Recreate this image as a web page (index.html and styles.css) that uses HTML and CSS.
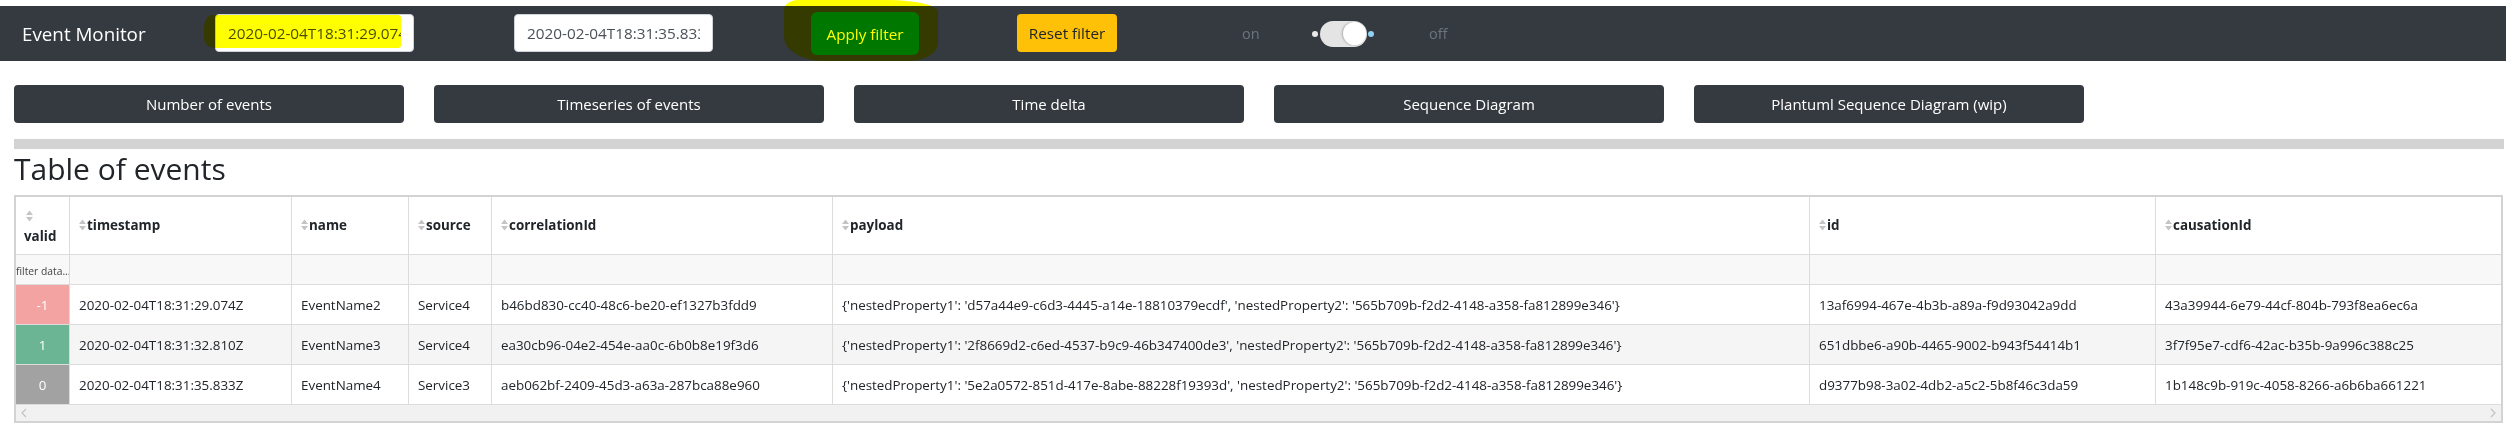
FILE: index.html
```html
<!DOCTYPE html>
<html lang="en">
<head>
<meta charset="utf-8">
<title>Event Monitor</title>
<link rel="stylesheet" href="styles.css">
</head>
<body>
<div class="page">
  <nav class="navbar">
    <span class="brand">Event Monitor</span>
    <input class="date-input first" type="text" value="2020-02-04T18:31:29.074">
    <input class="date-input second" type="text" value="2020-02-04T18:31:35.833">
    <button class="btn-apply" type="button">Apply filter</button>
    <button class="btn-reset" type="button">Reset filter</button>
    <div class="switch">
      <span class="switch-label">on</span>
      <span class="dot dot-left"></span>
      <span class="track"><span class="knob"></span></span>
      <span class="dot dot-right"></span>
      <span class="switch-label off">off</span>
    </div>
    <span class="highlight hl-input"></span>
    <span class="highlight hl-apply"></span>
  </nav>

  <div class="tabs">
    <button class="tab" type="button">Number of events</button>
    <button class="tab" type="button">Timeseries of events</button>
    <button class="tab" type="button">Time delta</button>
    <button class="tab" type="button">Sequence Diagram</button>
    <button class="tab" type="button">Plantuml Sequence Diagram (wip)</button>
  </div>

  <div class="divider"></div>

  <h2 class="title">Table of events</h2>

  <div class="table-frame">
    <table class="events">
      <colgroup>
        <col class="c-valid">
        <col class="c-ts">
        <col class="c-name">
        <col class="c-source">
        <col class="c-corr">
        <col class="c-payload">
        <col class="c-id">
        <col class="c-cause">
      </colgroup>
      <thead>
        <tr class="head-row">
          <th class="valid-head"><svg class="sort sort-block" viewBox="0 0 7 12" width="7" height="12"><path d="M0 5 L3.5 0.5 L7 5 Z M0 7 L3.5 11.5 L7 7 Z"/></svg><span>valid</span></th>
          <th><svg class="sort" viewBox="0 0 7 12" width="7" height="12"><path d="M0 5 L3.5 0.5 L7 5 Z M0 7 L3.5 11.5 L7 7 Z"/></svg>timestamp</th>
          <th><svg class="sort" viewBox="0 0 7 12" width="7" height="12"><path d="M0 5 L3.5 0.5 L7 5 Z M0 7 L3.5 11.5 L7 7 Z"/></svg>name</th>
          <th><svg class="sort" viewBox="0 0 7 12" width="7" height="12"><path d="M0 5 L3.5 0.5 L7 5 Z M0 7 L3.5 11.5 L7 7 Z"/></svg>source</th>
          <th><svg class="sort" viewBox="0 0 7 12" width="7" height="12"><path d="M0 5 L3.5 0.5 L7 5 Z M0 7 L3.5 11.5 L7 7 Z"/></svg>correlationId</th>
          <th><svg class="sort" viewBox="0 0 7 12" width="7" height="12"><path d="M0 5 L3.5 0.5 L7 5 Z M0 7 L3.5 11.5 L7 7 Z"/></svg>payload</th>
          <th><svg class="sort" viewBox="0 0 7 12" width="7" height="12"><path d="M0 5 L3.5 0.5 L7 5 Z M0 7 L3.5 11.5 L7 7 Z"/></svg>id</th>
          <th class="last"><svg class="sort" viewBox="0 0 7 12" width="7" height="12"><path d="M0 5 L3.5 0.5 L7 5 Z M0 7 L3.5 11.5 L7 7 Z"/></svg>causationId</th>
        </tr>
        <tr class="filter-row">
          <td class="filter-cell"><span class="placeholder">filter data...</span></td>
          <td></td><td></td><td></td><td></td><td></td><td></td><td class="last"></td>
        </tr>
      </thead>
      <tbody>
        <tr class="row">
          <td class="valid neg">-1</td>
          <td>2020-02-04T18:31:29.074Z</td>
          <td>EventName2</td>
          <td>Service4</td>
          <td>b46bd830-cc40-48c6-be20-ef1327b3fdd9</td>
          <td>{'nestedProperty1': 'd57a44e9-c6d3-4445-a14e-18810379ecdf', 'nestedProperty2': '565b709b-f2d2-4148-a358-fa812899e346'}</td>
          <td>13af6994-467e-4b3b-a89a-f9d93042a9dd</td>
          <td class="last">43a39944-6e79-44cf-804b-793f8ea6ec6a</td>
        </tr>
        <tr class="row striped">
          <td class="valid pos">1</td>
          <td>2020-02-04T18:31:32.810Z</td>
          <td>EventName3</td>
          <td>Service4</td>
          <td>ea30cb96-04e2-454e-aa0c-6b0b8e19f3d6</td>
          <td>{'nestedProperty1': '2f8669d2-c6ed-4537-b9c9-46b347400de3', 'nestedProperty2': '565b709b-f2d2-4148-a358-fa812899e346'}</td>
          <td>651dbbe6-a90b-4465-9002-b943f54414b1</td>
          <td class="last">3f7f95e7-cdf6-42ac-b35b-9a996c388c25</td>
        </tr>
        <tr class="row">
          <td class="valid zero">0</td>
          <td>2020-02-04T18:31:35.833Z</td>
          <td>EventName4</td>
          <td>Service3</td>
          <td>aeb062bf-2409-45d3-a63a-287bca88e960</td>
          <td>{'nestedProperty1': '5e2a0572-851d-417e-8abe-88228f19393d', 'nestedProperty2': '565b709b-f2d2-4148-a358-fa812899e346'}</td>
          <td>d9377b98-3a02-4db2-a5c2-5b8f46c3da59</td>
          <td class="last">1b148c9b-919c-4058-8266-a6b6ba661221</td>
        </tr>
      </tbody>
    </table>
    <div class="hscroll">
      <svg class="arrow" viewBox="0 0 6 10" width="6" height="10"><path d="M5 1 L1 5 L5 9" /></svg>
      <svg class="arrow" viewBox="0 0 6 10" width="6" height="10"><path d="M1 1 L5 5 L1 9" /></svg>
    </div>
  </div>
</div>
</body>
</html>
```

FILE: styles.css
```css
html, body {
  margin: 0;
  padding: 0;
  background: #ffffff;
}

body {
  font-family: "Open Sans", "Noto Sans", sans-serif;
  color: #212529;
}

.page {
  padding-top: 6px;
  width: 2506px;
}

/* ---------- navbar ---------- */
.navbar {
  position: relative;
  height: 55px;
  background: #343a40;
  display: flex;
  align-items: center;
}

.brand {
  box-sizing: border-box;
  width: 215px;
  padding-left: 22px;
  color: #ffffff;
  font-size: 18.8px;
  line-height: 24px;
  white-space: nowrap;
}

.date-input {
  box-sizing: border-box;
  width: 199px;
  height: 38px;
  padding: 0 12px;
  border: 1px solid #ced4da;
  border-radius: 4px;
  background: #ffffff;
  color: #495057;
  font-family: "Open Sans", "Noto Sans", sans-serif;
  font-size: 15.3px;
  margin-top: -1px;
}

.date-input.second {
  margin-left: 100px;
}

.btn-apply {
  box-sizing: border-box;
  margin-left: 98px;
  width: 108px;
  height: 43px;
  border: none;
  border-radius: 6px;
  background: #007800;
  color: #ffffff;
  font-family: "Open Sans", "Noto Sans", sans-serif;
  font-size: 15.3px;
  padding: 0;
}

.btn-reset {
  box-sizing: border-box;
  margin-left: 98px;
  width: 100px;
  height: 38px;
  border: none;
  border-radius: 4px;
  background: #ffc107;
  color: #212529;
  font-family: "Open Sans", "Noto Sans", sans-serif;
  font-size: 15.3px;
  padding: 0;
  margin-top: -1px;
}

.switch {
  display: flex;
  align-items: center;
  margin-left: 125px;
}

.switch-label {
  width: 70px;
  color: #6c757d;
  font-size: 14.5px;
}

.switch-label.off {
  width: auto;
  margin-left: 55px;
}

.dot {
  width: 6px;
  height: 6px;
  border-radius: 50%;
}

.dot-left {
  background: #e9e9e9;
  margin-right: 2px;
}

.dot-right {
  background: #8ed1f4;
  margin-left: 1px;
}

.track {
  box-sizing: border-box;
  width: 47px;
  height: 26px;
  border-radius: 13px;
  background: #e4e4e4;
  display: flex;
  align-items: center;
  justify-content: flex-end;
  padding-right: 1px;
}

.knob {
  width: 23px;
  height: 23px;
  border-radius: 50%;
  background: #ffffff;
  box-shadow: -1px 0 2px rgba(0, 0, 0, 0.25);
}

/* highlighter marks laid over the bar */
.highlight {
  position: absolute;
  background: #ffff00;
  mix-blend-mode: multiply;
  pointer-events: none;
}

.hl-input {
  left: 204px;
  top: 9px;
  width: 197px;
  height: 33px;
  border-radius: 8px 3px 3px 10px / 14px 3px 3px 10px;
}

.hl-apply {
  left: 784px;
  top: -6px;
  width: 154px;
  height: 61px;
  border-radius: 14px 50px 30px 40px / 10px 12px 18px 24px;
}

/* ---------- tab buttons ---------- */
.tabs {
  display: flex;
  gap: 30px;
  padding-left: 14px;
  margin-top: 24px;
}

.tab {
  box-sizing: border-box;
  width: 390px;
  height: 38px;
  border: none;
  border-radius: 4px;
  background: #343a40;
  color: #ffffff;
  font-family: "Open Sans", "Noto Sans", sans-serif;
  font-size: 15px;
  padding: 0;
}

.divider {
  margin: 16px 2px 0 14px;
  height: 10px;
  background: #d3d3d3;
}

.title {
  margin: 2px 0 8px 14px;
  font-size: 30px;
  line-height: 36px;
  font-weight: 500;
  color: #212529;
}

/* ---------- table ---------- */
.table-frame {
  box-sizing: border-box;
  margin-left: 14px;
  width: 2489px;
  border: 2px solid #d3d3d3;
}

.events {
  width: 2485px;
  table-layout: fixed;
  border-collapse: separate;
  border-spacing: 0;
  font-size: 13.4px;
}

.c-valid { width: 54px; }
.c-ts { width: 222px; }
.c-name { width: 117px; }
.c-source { width: 83px; }
.c-corr { width: 341px; }
.c-payload { width: 977px; }
.c-id { width: 346px; }
.c-cause { width: 345px; }

.events th,
.events td {
  box-sizing: border-box;
  border-right: 1px solid #dcdcdc;
  border-bottom: 1px solid #dcdcdc;
  padding: 0 0 0 9px;
  text-align: left;
  vertical-align: middle;
  white-space: nowrap;
  overflow: hidden;
}

.events .last {
  border-right: none;
}

.head-row th {
  height: 58px;
  font-weight: 700;
  color: #212529;
  background: #ffffff;
  line-height: 21px;
}

.valid-head {
  white-space: normal;
}

.valid-head span {
  display: block;
}

.sort {
  fill: #c4c4c4;
  vertical-align: -1px;
  margin-right: 1px;
}

.sort-block {
  display: block;
  margin: 0 0 4px 2px;
}

.head-row .valid-head {
  padding-left: 8px;
  padding-top: 6px;
}

.filter-row td {
  height: 30px;
  background: #f8f8f8;
}

.filter-row .filter-cell {
  padding-left: 0;
}

.placeholder {
  font-size: 10.3px;
  color: #444444;
}

.row td {
  height: 40px;
  background: #ffffff;
  color: #212529;
}

.row.striped td {
  background: #f5f5f5;
}

.row td.valid {
  padding: 0;
  text-align: center;
  color: #ffffff;
}

.row td.neg { background: #f4a3a3; }
.row td.pos { background: #6bb594; }
.row td.zero { background: #a2a2a2; }

.hscroll {
  height: 16px;
  background: #f1f1f1;
  display: flex;
  align-items: center;
  justify-content: space-between;
  padding: 0 5px;
}

.arrow {
  fill: none;
  stroke: #c2c2c2;
  stroke-width: 1.2;
}
```
